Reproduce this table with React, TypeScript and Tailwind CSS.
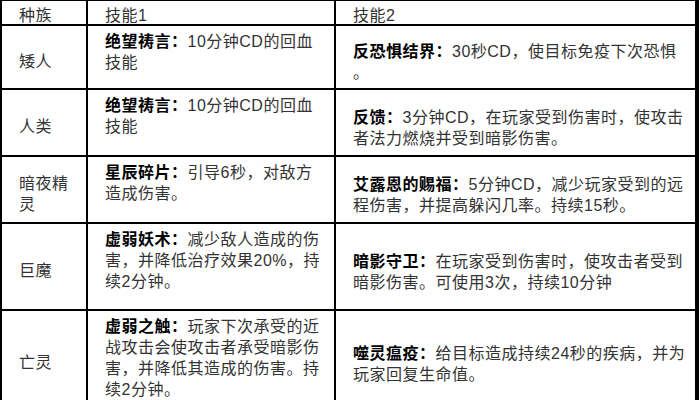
type Skill = {
  title: string;
  lines: string[];
};

type Row = {
  race: string;
  s1: Skill;
  s2: Skill;
};

const rows: Row[] = [
  {
    race: "矮人",
    s1: { title: "绝望祷言：", lines: ["10分钟CD的回血", "技能"] },
    s2: { title: "反恐惧结界：", lines: ["30秒CD，使目标免疫下次恐惧", "。"] },
  },
  {
    race: "人类",
    s1: { title: "绝望祷言：", lines: ["10分钟CD的回血", "技能"] },
    s2: {
      title: "反馈：",
      lines: ["3分钟CD，在玩家受到伤害时，使攻击", "者法力燃烧并受到暗影伤害。"],
    },
  },
  {
    race: "暗夜精灵",
    s1: { title: "星辰碎片：", lines: ["引导6秒，对敌方", "造成伤害。"] },
    s2: {
      title: "艾露恩的赐福：",
      lines: ["5分钟CD，减少玩家受到的远", "程伤害，并提高躲闪几率。持续15秒。"],
    },
  },
  {
    race: "巨魔",
    s1: {
      title: "虚弱妖术：",
      lines: ["减少敌人造成的伤", "害，并降低治疗效果20%，持", "续2分钟。"],
    },
    s2: {
      title: "暗影守卫：",
      lines: ["在玩家受到伤害时，使攻击者受到", "暗影伤害。可使用3次，持续10分钟"],
    },
  },
  {
    race: "亡灵",
    s1: {
      title: "虚弱之触：",
      lines: [
        "玩家下次承受的近",
        "战攻击会使攻击者承受暗影伤",
        "害，并降低其造成的伤害。持",
        "续2分钟。",
      ],
    },
    s2: {
      title: "噬灵瘟疫：",
      lines: ["给目标造成持续24秒的疾病，并为", "玩家回复生命值。"],
    },
  },
];

function SkillText({ skill }: { skill: Skill }) {
  return (
    <div className="whitespace-nowrap">
      {skill.lines.map((line, i) => (
        <div key={i}>
          {i === 0 && <span className="font-bold text-black">{skill.title}</span>}
          {line}
        </div>
      ))}
    </div>
  );
}

export default function App() {
  return (
    <div className="w-[699px] h-[400px] overflow-hidden bg-white font-['Liberation_Sans','Noto_Sans_CJK_SC',sans-serif] text-[16px] leading-[21px] tracking-[0.5px] text-[#333]">
      <div className="grid w-[699px] grid-cols-[84px_246px_359px] grid-rows-[23px_62px_65px_65px_85px_95px] gap-[2px] bg-black pt-[1px] pl-[2px] pr-[4px]">
        {/* header */}
        <div className="bg-white px-[17px] pt-[4px] whitespace-nowrap">种族</div>
        <div className="bg-white px-[17px] pt-[4px] whitespace-nowrap">技能1</div>
        <div className="bg-white px-[17px] pt-[4px] whitespace-nowrap">技能2</div>

        {rows.map((row) => (
          <div key={row.race} className="contents">
            <div className="flex items-center bg-white px-[17px] pt-[8px]">
              {row.race}
            </div>
            <div className="bg-white pl-[17px] pt-[5px]">
              <SkillText skill={row.s1} />
            </div>
            <div className="flex items-center bg-white pl-[17px] pt-[10px]">
              <SkillText skill={row.s2} />
            </div>
          </div>
        ))}
      </div>
    </div>
  );
}
